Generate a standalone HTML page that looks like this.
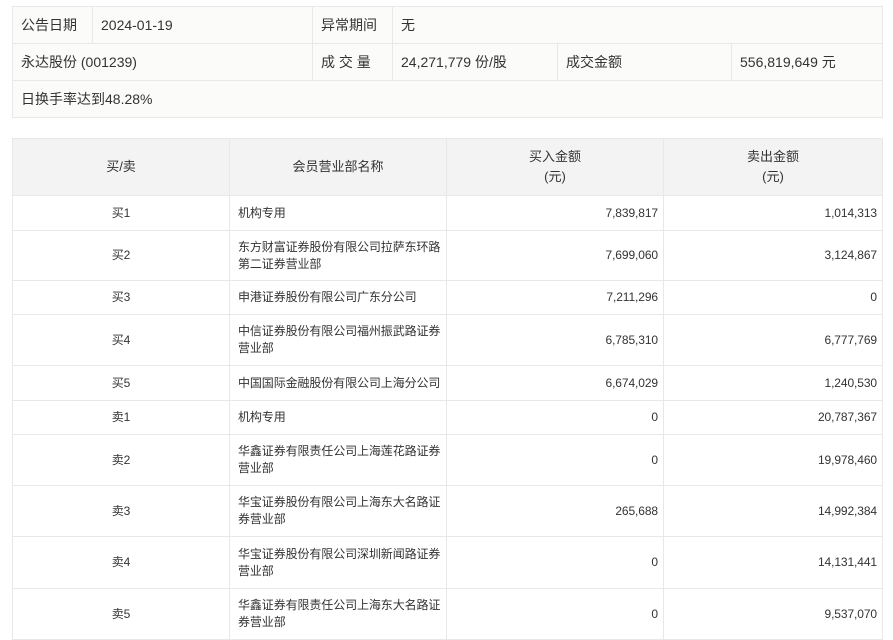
<!DOCTYPE html>
<html><head><meta charset="utf-8"><style>
body{margin:0;background:#fff;font-family:"Liberation Sans","Noto Sans CJK SC",sans-serif;font-size:13px;color:#333;}
table{border-collapse:collapse;position:absolute;left:12px;width:870px;table-layout:fixed;}
td,th{border:1px solid #e8e8e8;padding:0 8px;font-weight:normal;}
#t1{top:6px;background:#fbfbf9;font-size:14px;}
#t1 td{height:36px;}
#t2{top:138px;font-size:12px;}
#t2 td{padding:0 4px 0 8px;letter-spacing:-0.1px;line-height:17px;}
#t2 td.r{padding-right:5px;}
#t2 td.c{padding:0 4px;}
#t2 th{background:#f3f3f3;height:56px;text-align:center;line-height:20px;font-size:13px;}
.c{text-align:center}.r{text-align:right}
</style></head><body>
<table id="t1">
<colgroup><col style="width:80px"><col style="width:220px"><col style="width:80px"><col style="width:165px"><col style="width:174px"><col style="width:151px"></colgroup>
<tr><td>公告日期</td><td>2024-01-19</td><td>异常期间</td><td colspan="3">无</td></tr>
<tr><td colspan="2">永达股份 (001239)</td><td>成 交 量</td><td>24,271,779 份/股</td><td>成交金额</td><td>556,819,649 元</td></tr>
<tr><td colspan="6">日换手率达到48.28%</td></tr>
</table>
<table id="t2">
<colgroup><col style="width:217px"><col style="width:217px"><col style="width:217px"><col style="width:219px"></colgroup>
<tr><th>买/卖</th><th>会员营业部名称</th><th>买入金额<br>(元)</th><th>卖出金额<br>(元)</th></tr>
<tr style="height:35px"><td class="c">买1</td><td>机构专用</td><td class="r">7,839,817</td><td class="r">1,014,313</td></tr>
<tr style="height:50px"><td class="c">买2</td><td>东方财富证券股份有限公司拉萨东环路<br>第二证券营业部</td><td class="r">7,699,060</td><td class="r">3,124,867</td></tr>
<tr style="height:34px"><td class="c">买3</td><td>申港证券股份有限公司广东分公司</td><td class="r">7,211,296</td><td class="r">0</td></tr>
<tr style="height:51px"><td class="c">买4</td><td>中信证券股份有限公司福州振武路证券<br>营业部</td><td class="r">6,785,310</td><td class="r">6,777,769</td></tr>
<tr style="height:35px"><td class="c">买5</td><td style="white-space:nowrap">中国国际金融股份有限公司上海分公司</td><td class="r">6,674,029</td><td class="r">1,240,530</td></tr>
<tr style="height:34px"><td class="c">卖1</td><td>机构专用</td><td class="r">0</td><td class="r">20,787,367</td></tr>
<tr style="height:51px"><td class="c">卖2</td><td>华鑫证券有限责任公司上海莲花路证券<br>营业部</td><td class="r">0</td><td class="r">19,978,460</td></tr>
<tr style="height:51px"><td class="c">卖3</td><td>华宝证券股份有限公司上海东大名路证<br>券营业部</td><td class="r">265,688</td><td class="r">14,992,384</td></tr>
<tr style="height:52px"><td class="c">卖4</td><td>华宝证券股份有限公司深圳新闻路证券<br>营业部</td><td class="r">0</td><td class="r">14,131,441</td></tr>
<tr style="height:51px"><td class="c">卖5</td><td>华鑫证券有限责任公司上海东大名路证<br>券营业部</td><td class="r">0</td><td class="r">9,537,070</td></tr>
</table>
</body></html>
